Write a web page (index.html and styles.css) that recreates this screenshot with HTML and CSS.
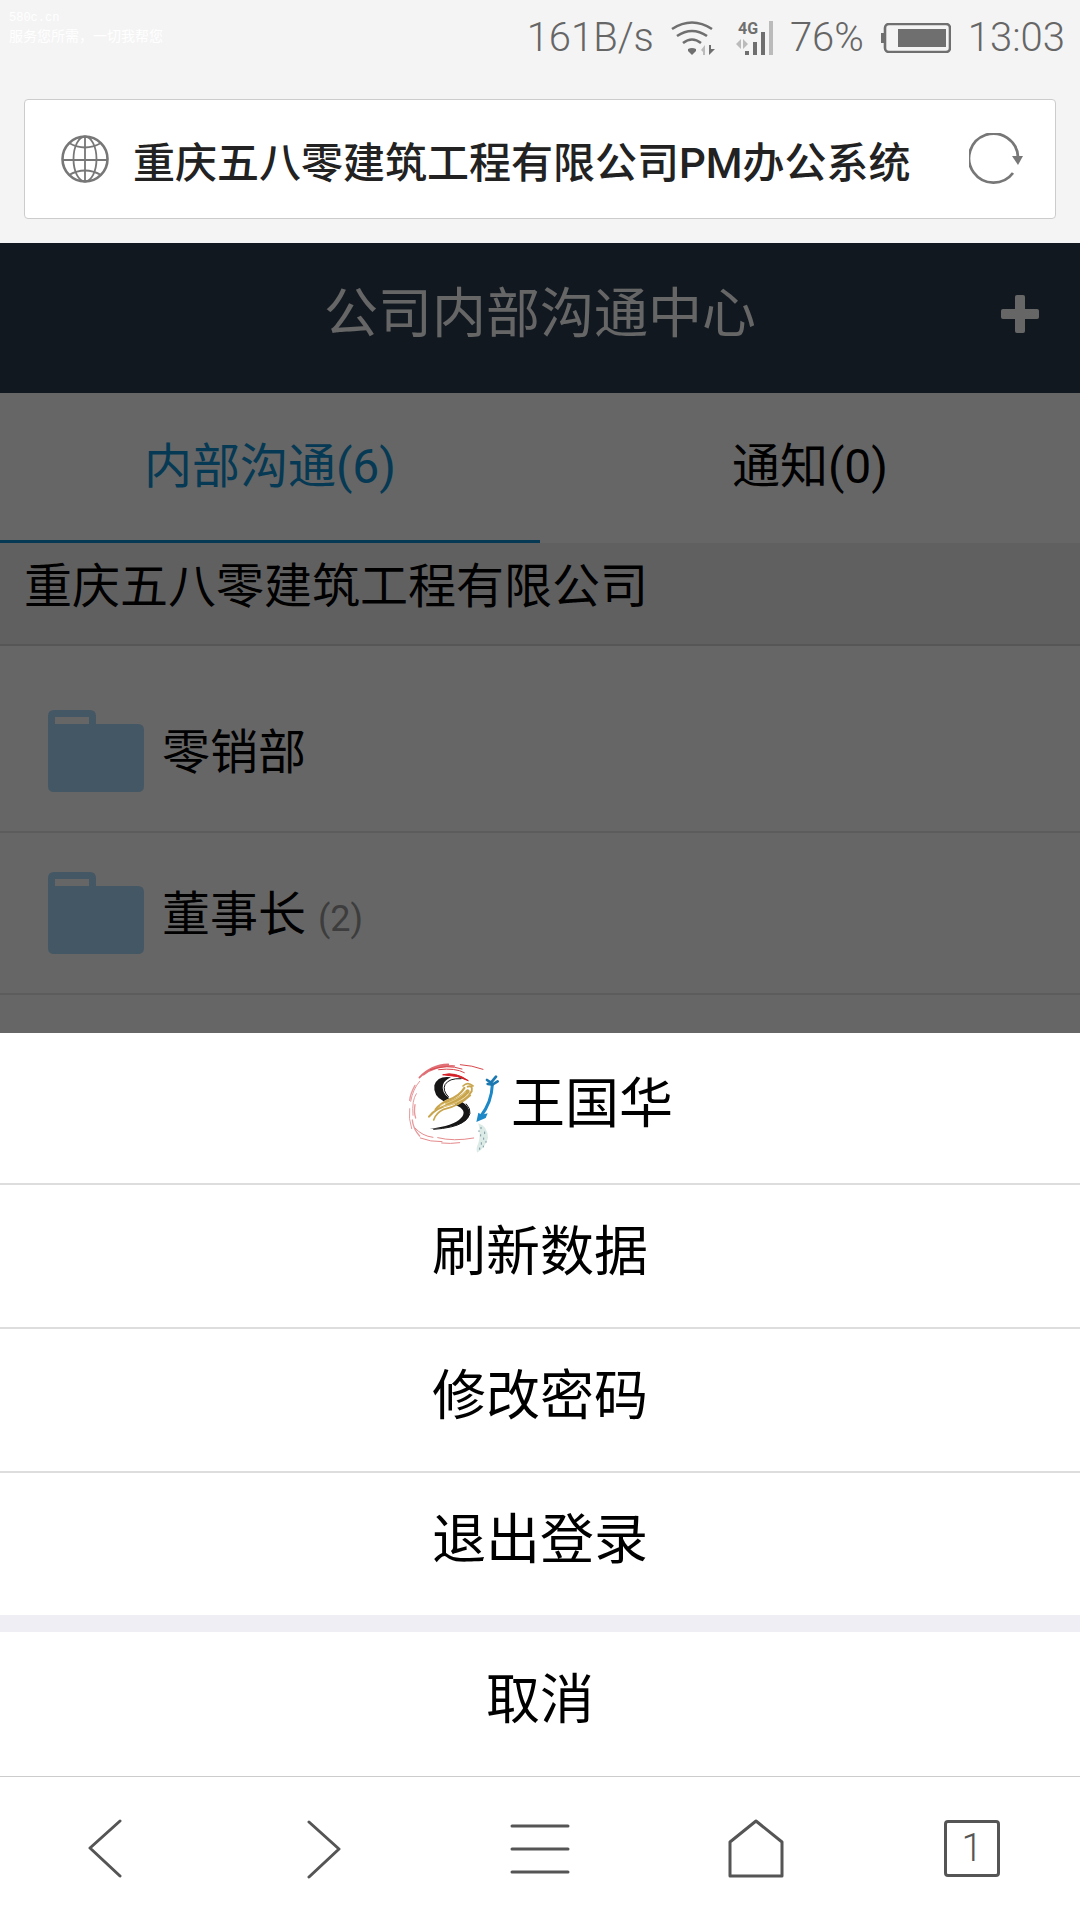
FILE: index.html
```html
<!DOCTYPE html>
<html lang="zh-CN">
<head>
  <meta charset="UTF-8">
  <meta name="viewport" content="width=device-width, initial-scale=1.0">
  <title>公司内部沟通中心</title>
  <link rel="stylesheet" href="styles.css">
</head>
<body>

<div class="status-bar">
  <div class="watermark">
    <span class="watermark-site">580c.cn</span>
    <span>服务您所需，一切我帮您</span>
  </div>
  <div class="status-items">
    <span>161B/s</span>
    <svg width="44" height="34" viewBox="0 0 44 34">
      <g fill="none" stroke="#6f6f6f" stroke-width="2.6">
        <path d="M1 8Q21 -5 41 8"/>
        <path d="M6 15Q21 5 36 15"/>
        <path d="M12 22Q21 15 30 22"/>
      </g>
      <path d="M17 28Q21 26 25 28V30L21 34L17 30Z" fill="#6f6f6f"/>
      <path d="M34 24V34H32V31L30 29Z" fill="#bbb"/>
      <path d="M38 24L40 24V28H44L38 34Z" fill="#6f6f6f"/>
    </svg>
    <svg class="signal" width="37" height="46" viewBox="0 -6 37 46">
      <text class="signal-type" x="2" y="13">4G</text>
      <path d="M9 30H13V34H9ZM17 21H21V34H17ZM25 11H29V34H25Z" fill="#6f6f6f"/>
      <path d="M33 0H37V34H33ZM5 18V28L0 23ZM7 18V28L12 23Z" fill="#bbb"/>
    </svg>
    <span>76%</span>
    <svg width="70" height="30" viewBox="0 0 70 30">
      <rect x="4" y="1" width="65" height="28" rx="4" fill="none" stroke="#6f6f6f" stroke-width="2.6"/>
      <path d="M0 10H3V20H0ZM17 6H65V24H17Z" fill="#6f6f6f"/>
    </svg>
    <span>13:03</span>
  </div>
</div>

<div class="address-bar">
  <div class="address-box">
    <svg width="48" height="48" viewBox="0 0 48 48" fill="none" stroke="#777">
      <circle cx="24" cy="24" r="22.5" stroke-width="2.6"/>
      <g stroke-width="1.8">
        <path d="M24 1V47M1 25H47"/>
        <ellipse cx="24" cy="24" rx="11.5" ry="22.5"/>
        <path d="M8 8Q24 17 40 8M8 40Q24 31 40 40"/>
      </g>
    </svg>
    <input class="address-input" type="text" aria-label="网址" value="重庆五八零建筑工程有限公司PM办公系统">
    <button class="icon-btn" type="button" aria-label="刷新">
      <svg width="56" height="52" viewBox="0 0 56 52">
        <path d="M44 40A24.5 24.5 0 1 1 49 24" fill="none" stroke="#777" stroke-width="2.8"/>
        <path d="M43 23H54L49 32Z" fill="#777"/>
      </svg>
    </button>
  </div>
</div>

<main class="screen">
  <header class="app-header">
    <h1>公司内部沟通中心</h1>
    <button class="icon-btn add-btn" type="button" aria-label="添加">
      <svg width="38" height="38" viewBox="0 0 38 38" fill="#fff">
        <rect x="14" y="0" width="10" height="38" rx="2"/>
        <rect x="0" y="14" width="38" height="10" rx="2"/>
      </svg>
    </button>
  </header>

  <nav class="tabs">
    <a class="tab active" href="#chat">内部沟通(6)</a>
    <a class="tab" href="#notice">通知(0)</a>
  </nav>

  <h2 class="company">重庆五八零建筑工程有限公司</h2>

  <ul class="departments">
    <li class="department">
      <svg width="96" height="82" viewBox="0 0 96 82">
        <path fill="#abd9fb" fill-rule="evenodd" d="M6 0H42Q48 0 48 6V14H90Q96 14 96 20V76Q96 82 90 82H6Q0 82 0 76V6Q0 0 6 0ZM7 7V14H41V7Z"/>
      </svg>
      <span>零销部</span>
    </li>
    <li class="department">
      <svg width="96" height="82" viewBox="0 0 96 82">
        <path fill="#abd9fb" fill-rule="evenodd" d="M6 0H42Q48 0 48 6V14H90Q96 14 96 20V76Q96 82 90 82H6Q0 82 0 76V6Q0 0 6 0ZM7 7V14H41V7Z"/>
      </svg>
      <span>董事长 <small class="count">(2)</small></span>
    </li>
  </ul>

  <div class="mask">
    <div class="sheet">
      <div class="sheet-user">
        <svg width="92" height="93" viewBox="80 90 276 279" fill="none" stroke-linecap="round">
          <!-- red brush ring -->
          <g stroke="#d9474c" stroke-width="3">
            <path d="M117 137Q150 99 204 97M130 128Q165 100 222 102" stroke="#e07075" stroke-width="5"/>
            <path d="M150 113Q200 96 245 111M175 113Q225 107 252 122M240 98Q275 100 308 112"/>
            <path d="M118 148Q98 170 91 208M108 185Q94 205 98 250M88 230Q84 260 94 290" stroke="#e79a9c" stroke-width="3"/>
            <path d="M104 160Q90 185 88 205M104 218Q100 240 106 258M96 264Q98 290 118 312" stroke="#e79a9c" stroke-width="4"/>
            <path d="M104 288Q125 312 158 316M120 318Q150 330 185 329M172 317Q220 329 280 318M184 333Q210 336 238 332" stroke="#e58a8c"/>
          </g>
          <path d="M188 128Q225 118 264 146L232 134Z" fill="#d42027" stroke="#d42027" stroke-width="3"/>
          <!-- figure eight -->
          <path d="M212 136Q172 130 162 160Q158 192 190 208L207 199Q182 180 188 158Q193 144 212 136Z" fill="#161616"/>
          <path d="M242 140Q206 138 194 158Q186 176 204 194" stroke="#161616" stroke-width="3"/>
          <path d="M224 218Q264 234 242 258Q220 282 148 290Q220 290 256 266Q286 236 242 208Z" fill="#161616"/>
          <path d="M258 216Q286 246 246 272Q220 288 160 292" stroke="#161616" stroke-width="3"/>
          <g stroke="#c9a54d">
            <path d="M262 164Q278 158 274 178Q256 210 214 216Q168 226 146 254" stroke-width="6"/>
            <path d="M252 168Q238 192 204 204Q178 216 166 232" stroke-width="7"/>
            <path d="M248 162Q262 148 278 162M270 190Q236 222 190 232Q166 244 160 264" stroke-width="5"/>
            <path d="M262 178Q240 204 200 214" stroke-width="12"/>
          </g>
          <path d="M256 180Q230 206 180 220M264 188Q236 214 190 224" stroke="#f0dca0" stroke-width="2"/>
          <!-- blue arrow -->
          <path d="M336 158Q334 210 302 252" stroke="#1c88c7" stroke-width="9"/>
          <path d="M288 270L294 242L304 248L322 244L316 258Z" fill="#1c88c7"/>
          <path d="M320 144L332 152L347 134M322 156L336 158L352 148" stroke="#1c78b0" stroke-width="8"/>
          <!-- feather tail -->
          <path d="M294 274Q322 282 323 318Q312 352 290 362Q286 350 294 334Q302 306 294 274Z" fill="#dcebe6"/>
          <path d="M302 286V290M313 300V305M301 308V312M310 318V322M317 328V331M303 332V337M298 348V352M309 342V345M296 296V299" stroke="#7d9aa6" stroke-width="3"/>
        </svg>
        <span>王国华</span>
      </div>
      <button class="sheet-btn" type="button">刷新数据</button>
      <button class="sheet-btn" type="button">修改密码</button>
      <button class="sheet-btn" type="button">退出登录</button>
      <button class="sheet-btn cancel" type="button">取消</button>
    </div>
  </div>
</main>

<footer class="toolbar">
  <button class="icon-btn" type="button" aria-label="后退">
    <svg width="60" height="60" viewBox="0 0 60 60"><path d="M42 2L12 29L42 57"/></svg>
  </button>
  <button class="icon-btn" type="button" aria-label="前进">
    <svg width="60" height="60" viewBox="0 0 60 60"><path d="M15 3L45 30L15 58"/></svg>
  </button>
  <button class="icon-btn" type="button" aria-label="菜单">
    <svg width="60" height="60" viewBox="0 0 60 60"><path d="M2 7H58M2 30H58M2 53H58"/></svg>
  </button>
  <button class="icon-btn" type="button" aria-label="主页">
    <svg width="60" height="60" viewBox="0 0 60 60"><path d="M4 23L30 2L56 23V57H4Z"/></svg>
  </button>
  <button class="icon-btn" type="button" aria-label="窗口">
    <span class="tab-count">1</span>
  </button>
</footer>

</body>
</html>
```

FILE: styles.css
```css
* {
  box-sizing: border-box;
}

body {
  font-family: Roboto, "Noto Sans CJK SC", sans-serif;
  margin: 0;
  min-height: 100vh;
  display: flex;
  flex-direction: column;
  background-color: #fff;
  color: #000;
}

button {
  font-family: inherit;
  border: none;
  background: none;
  padding: 0;
  cursor: pointer;
}

svg {
  display: block;
  flex-shrink: 0;
}

h1, h2, ul {
  margin: 0;
  padding: 0;
  font-weight: normal;
}

/* phone status bar */
.status-bar {
  display: flex;
  justify-content: space-between;
  height: 75px;
  padding: 0 15px 0 9px;
  background-color: #f4f4f4;
}

.watermark {
  display: flex;
  flex-direction: column;
  padding-top: 9px;
  font-size: 14px;
  line-height: 18px;
  color: #fff;
}

.watermark-site {
  font-family: "Liberation Mono", monospace;
  font-size: 12px;
}

.status-items {
  display: flex;
  align-items: center;
  gap: 17px;
  font-size: 40px;
  font-weight: 300;
  color: #666;
}

.signal {
  margin-left: 4px;
}

.signal-type {
  font-size: 16px;
  font-weight: bold;
  fill: #6f6f6f;
}

/* address bar */
.address-bar {
  padding: 24px;
  background-color: #f4f4f4;
}

.address-box {
  display: flex;
  align-items: center;
  gap: 24px;
  height: 120px;
  padding: 0 30px 0 36px;
  border: 1px solid #ccc;
  border-radius: 4px;
  background-color: #fff;
}

.address-input {
  flex: 1;
  min-width: 0;
  padding: 0;
  border: none;
  outline: none;
  background: none;
  font-family: inherit;
  font-size: 42px;
  font-weight: 500;
  color: #222;
}

/* page under the mask */
.screen {
  flex: 1;
  position: relative;
}

.app-header {
  display: flex;
  align-items: center;
  justify-content: center;
  position: relative;
  height: 150px;
  padding-bottom: 18px;
  background-color: #2c3e50;
  color: #fff;
}

.app-header h1 {
  font-size: 54px;
}

.add-btn {
  position: absolute;
  top: 52px;
  right: 41px;
}

.tabs {
  display: flex;
}

.tab {
  flex: 1;
  height: 150px;
  border-bottom: 3px solid #fff;
  font-size: 48px;
  line-height: 147px;
  text-align: center;
  text-decoration: none;
  color: #000;
}

.tab.active {
  color: #0e90d2;
  border-color: #0e90d2;
}

.company {
  height: 103px;
  padding: 0 24px;
  border-bottom: 2px solid #d6d6d6;
  background-color: #f0f0f0;
  font-size: 48px;
  line-height: 88px;
}

.departments {
  padding-top: 25px;
  list-style: none;
}

.department {
  display: flex;
  align-items: center;
  gap: 18px;
  height: 162px;
  padding: 0 48px;
  border-bottom: 2px solid #e6e6e6;
  font-size: 48px;
}

.department span {
  padding-bottom: 6px;
}

.count {
  font-size: 36px;
  color: #999;
}

/* action sheet */
.mask {
  display: flex;
  align-items: flex-end;
  position: absolute;
  inset: 0;
  background-color: rgba(0, 0, 0, 0.6);
}

.sheet {
  width: 100%;
  background-color: #fff;
  font-size: 54px;
}

.sheet-user {
  display: flex;
  align-items: center;
  justify-content: center;
  gap: 12px;
  height: 150px;
}

.sheet-user span {
  padding-bottom: 18px;
}

.sheet-btn {
  display: block;
  width: 100%;
  height: 144px;
  padding-bottom: 18px;
  border-top: 2px solid #ddd;
  font-size: 54px;
  color: #000;
}

.sheet-btn.cancel {
  height: 161px;
  border-top: 17px solid #eeeef4;
}

/* browser toolbar */
.toolbar {
  display: flex;
  height: 144px;
  border-top: 1px solid #ccc;
}

.toolbar .icon-btn {
  flex: 1;
  display: flex;
  align-items: center;
  justify-content: center;
}

.toolbar svg {
  fill: none;
  stroke: #555;
  stroke-width: 3;
  stroke-linecap: round;
  stroke-linejoin: round;
}

.tab-count {
  width: 56px;
  height: 57px;
  border: 3px solid #555;
  border-radius: 4px;
  font-size: 38px;
  font-weight: 300;
  line-height: 51px;
  color: #555;
}
```
